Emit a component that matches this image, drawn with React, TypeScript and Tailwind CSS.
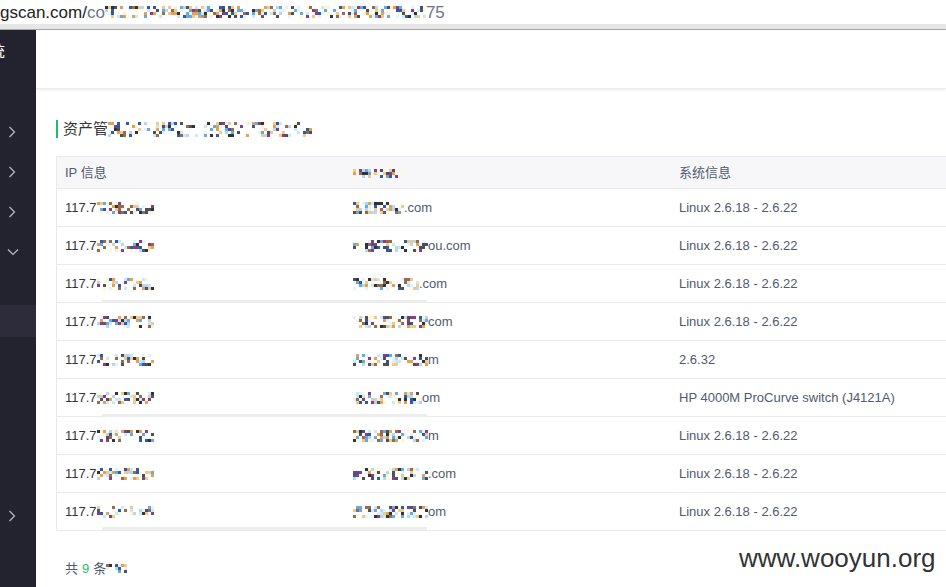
import React from 'react'

const PALETTE = [
  '#fff6cc', '#dff4ff', '#f3c98a', '#e3a24f', '#6aa9e0', '#2e5aa8',
  '#333333', '#8a3d82', '#9b6a4a', '#c9e9f6', '#4f4f5a', '#b8d7ef'
]

// deterministic pseudo random for the pixelated (redacted) spots
function rand(seed: number) {
  let s = seed
  return () => {
    s = (s * 9301 + 49297) % 233280
    return s / 233280
  }
}

interface MosaicProps {
  width: number
  height?: number
  seed: number
  density?: number
}

const Mosaic: React.FC<MosaicProps> = ({ width, height = 12, seed, density = 0.45 }) => {
  const r = rand(seed)
  const cols = Math.round(width / 3)
  const rows = Math.round(height / 3)
  const cells: (string | null)[] = []
  for (let i = 0; i < cols * rows; i++) {
    cells.push(r() < density ? PALETTE[Math.floor(r() * PALETTE.length)] : null)
  }
  return (
    <span
      className="inline-grid align-middle"
      style={{ gridTemplateColumns: `repeat(${cols}, 3px)`, gridAutoRows: '3px' }}
    >
      {cells.map((c, i) => (
        <span key={i} style={{ background: c ?? 'transparent' }} />
      ))}
    </span>
  )
}

const Chevron = () => (
  <svg width="8" height="12" viewBox="0 0 8 12" className="ml-[8px]">
    <polyline points="1.5,1 6.5,6 1.5,11" fill="none" stroke="#b9bac2" strokeWidth="1.2" />
  </svg>
)

const ChevronDown = () => (
  <svg width="12" height="8" viewBox="0 0 12 8" className="ml-[7px]">
    <polyline points="1,1.5 6,6.5 11,1.5" fill="none" stroke="#b9bac2" strokeWidth="1.2" />
  </svg>
)

const rows = [
  { ipW: 58, hostW: 50, host: '.com', os: 'Linux 2.6.18 - 2.6.22' },
  { ipW: 58, hostW: 74, host: 'ou.com', os: 'Linux 2.6.18 - 2.6.22' },
  { ipW: 58, hostW: 66, host: '.com', os: 'Linux 2.6.18 - 2.6.22' },
  { ipW: 58, hostW: 74, host: ' com', os: 'Linux 2.6.18 - 2.6.22' },
  { ipW: 58, hostW: 74, host: 'm', os: '2.6.32' },
  { ipW: 58, hostW: 68, host: 'om', os: 'HP 4000M ProCurve switch (J4121A)' },
  { ipW: 58, hostW: 74, host: 'm', os: 'Linux 2.6.18 - 2.6.22' },
  { ipW: 58, hostW: 74, host: '.com', os: 'Linux 2.6.18 - 2.6.22' },
  { ipW: 58, hostW: 74, host: 'om', os: 'Linux 2.6.18 - 2.6.22' }
]

export default function App() {
  return (
    <div
      className="relative w-[946px] h-[587px] overflow-hidden bg-white text-[#515a6e]"
      style={{ fontFamily: '"Liberation Sans", "Noto Sans CJK SC", sans-serif' }}
    >
      {/* address bar */}
      <div className="h-[24px] flex items-center whitespace-nowrap text-[17px] leading-none">
        <span className="text-[#222]">gscan.com/</span>
        <span className="text-[#6b7684]">co</span>
        <Mosaic width={322} height={12} seed={7} density={0.5} />
        <span className="text-[#6b7684]">75</span>
      </div>
      <div className="h-[5px] bg-[#e6e6e6]" />
      <div className="h-[1px] bg-[#a9a9a9]" />

      <div className="flex h-[557px]">
        {/* sidebar */}
        <div className="w-[36px] shrink-0 bg-[#23232f] flex flex-col overflow-hidden">
          <div className="h-[59px] pt-[12px] whitespace-nowrap">
            <div className="-ml-[11px] text-[16px] leading-[20px] text-white">统</div>
            <div className="-ml-[6px] text-[11px] leading-[12px] text-[#9a9aa3]">n</div>
          </div>
          <div className="h-[23px]" />
          <div className="h-[40px] flex items-center"><Chevron /></div>
          <div className="h-[40px] flex items-center"><Chevron /></div>
          <div className="h-[40px] flex items-center"><Chevron /></div>
          <div className="h-[40px] flex items-center"><ChevronDown /></div>
          <div className="h-[33px]" />
          <div className="h-[32px] bg-[#2c2c3a]" />
          <div className="h-[159px]" />
          <div className="h-[40px] flex items-center"><Chevron /></div>
        </div>

        {/* main */}
        <div className="flex-1 flex flex-col min-w-0">
          <div className="h-[59px] shrink-0 bg-white shadow-[0_1px_3px_rgba(0,0,0,0.08)] border-b border-[#ececec]" />

          <div className="pl-[20px] pt-[31px]">
            <div className="h-[18px] flex items-center border-l-2 border-[#19be6b] pl-[5px] text-[15px] text-[#333] whitespace-nowrap">
              <span>资产管</span>
              <Mosaic width={204} height={15} seed={21} density={0.4} />
            </div>

            <div className="mt-[18px] w-[900px] border-l border-t border-[#e8eaec] text-[13px]">
              <div className="h-[32px] flex items-center bg-[#f7f7f9] border-b border-[#e8eaec]">
                <div className="w-[288px] pl-[8px]">IP 信息</div>
                <div className="w-[326px] pl-[8px]">
                  <Mosaic width={48} height={9} seed={3} density={0.6} />
                </div>
                <div className="flex-1 pl-[8px]">系统信息</div>
              </div>
              {rows.map((row, i) => (
                <div key={i} className="h-[38px] flex items-center border-b border-[#e8eaec] whitespace-nowrap">
                  <div className="w-[288px] pl-[8px] flex items-center">
                    <span className="text-[#333]">117.7</span>
                    <Mosaic width={row.ipW} height={12} seed={100 + i * 13} density={0.5} />
                  </div>
                  <div className="w-[326px] pl-[8px] flex items-center">
                    <Mosaic width={row.hostW} height={12} seed={300 + i * 17} density={0.55} />
                    <span className="text-[#515a6e]">{row.host}</span>
                  </div>
                  <div className="flex-1 pl-[8px]">{row.os}</div>
                </div>
              ))}
            </div>

            <div className="mt-[28px] pl-[9px] text-[13px] text-[#515a6e] flex items-center whitespace-nowrap">
              <span>共 </span>
              <span className="text-[#19be6b] mx-[4px]">9</span>
              <span>条</span>
              <Mosaic width={21} height={9} seed={55} density={0.6} />
            </div>
          </div>
        </div>
      </div>

      {/* seams of the pasted redaction strip */}
      <div className="absolute left-[102px] top-[300px] w-[325px] h-[3px] bg-[#ededed]" />
      <div className="absolute left-[102px] top-[414px] w-[325px] h-[3px] bg-[#ededed]" />
      <div className="absolute left-[102px] top-[527px] w-[325px] h-[3px] bg-[#ededed]" />

      {/* watermark */}
      <div className="absolute left-[739px] top-[543px] text-[26px] leading-[30px] text-[#333]">
        www.wooyun.org
      </div>
    </div>
  )
}
